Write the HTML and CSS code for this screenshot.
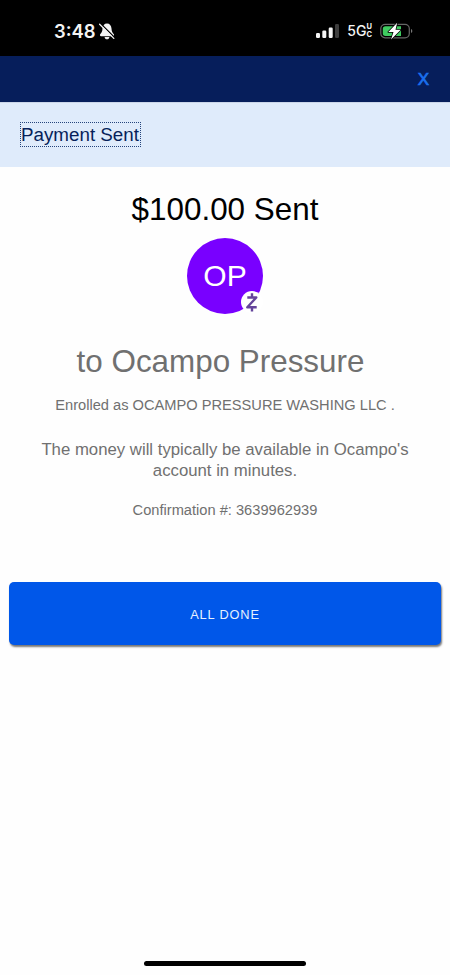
FILE: index.html
```html
<!DOCTYPE html>
<html lang="en">
<head>
<meta charset="utf-8">
<meta name="viewport" content="width=device-width, initial-scale=1">
<title>Payment Sent</title>
<link rel="stylesheet" href="styles.css">
</head>
<body>
<div class="status">
  <div class="clock"><span>3:48</span>
    <svg class="bell" width="16" height="17" viewBox="0 0 16 17"><path d="M8 .5C5.300.5 3.700 2.500 3.500 5.500 3.300 8.500 2.700 9.500 1.300 11.100c-.7.9-.3 2.100.8 2.100h11.800c1.100 0 1.500-1.200.8-2.100C13.300 9.500 12.700 8.500 12.500 5.500 12.300 2.500 10.700.5 8 .5Z" fill="#f4f4f4"/><path d="M5.600 14h4.800c-.2 1.500-1 2.300-2.400 2.300s-2.200-.8-2.400-2.300Z" fill="#eee"/><path d="M1.300.2 15.800 14.700" stroke="#000" stroke-width="1.300"/><path d="M.6 1.200 14.800 15.400" stroke="#f4f4f4" stroke-width="1.300" stroke-linecap="round"/></svg>
  </div>
  <div class="indicators">
    <svg width="24" height="15" viewBox="0 0 24 15"><g fill="#f4f4f4"><rect x="0" y="9" width="4" height="5" rx="1.200"/><rect x="6.300" y="6.500" width="4" height="7.500" rx="1.200"/><rect x="12.700" y="3.500" width="4" height="10.500" rx="1.200"/></g><rect x="19" y="0" width="4" height="14" rx="1.200" fill="#3d3d3d"/></svg>
    <span class="network">5G</span><span class="uc"><span>U</span><span>C</span></span>
    <svg class="battery" width="33" height="18" viewBox="0 0 33 18"><rect x=".8" y="2.300" width="28.500" height="13.500" rx="4.300" fill="none" stroke="#666" stroke-width="1.200"/><path d="M5.500 4.200H21v9.700H5.500a2.700 2.700 0 0 1-2.700-2.700V6.900a2.700 2.700 0 0 1 2.700-2.700Z" fill="#3fcb60"/><path d="M31 7c1.800.6 1.800 3.400 0 4Z" fill="#777"/><path d="M17.200.8 8.300 10h5.200l-2.500 7.500L20.800 7.800h-5.300Z" fill="#fff" stroke="#000" stroke-width="1.500" stroke-linejoin="round" paint-order="stroke"/></svg>
  </div>
</div>
<header class="topbar"><button class="close" aria-label="Close">X</button></header>
<div class="heading"><h1>Payment Sent</h1></div>
<main>
  <p class="amount">$100.00 Sent</p>
  <div class="avatar"><span>OP</span>
    <svg class="zelle" width="24" height="24" viewBox="0 0 24 24"><circle cx="12" cy="12" r="11" fill="#fff"/><path d="M7.300 7.500h9L7.300 17.300h9.400M12 3.200v4.300M12 17.300v4.300" fill="none" stroke="#65459b" stroke-width="2.400" stroke-linejoin="round"/></svg>
  </div>
  <h2>to Ocampo Pressure</h2>
  <p class="enrolled">Enrolled as OCAMPO PRESSURE WASHING LLC .</p>
  <p class="message">The money will typically be available in Ocampo's<br>account in minutes.</p>
  <p class="confirmation">Confirmation #: 3639962939</p>
  <button class="done">ALL DONE</button>
</main>
<footer><div class="home"></div></footer>
</body>
</html>
```
FILE: styles.css
```css
* { box-sizing: border-box; }
body {
  margin: 0;
  height: 975px;
  display: flex;
  flex-direction: column;
  overflow: hidden;
  background: #fefefe;
  color: #707070;
  font-family: "Liberation Sans", Arial, sans-serif;
}
h1, h2, p { margin: 0; font-weight: 400; }
button { border: 0; font-family: inherit; padding: 0; }
.status {
  height: 56px;
  flex: none;
  background: #000;
  color: #f4f4f4;
  display: flex;
  justify-content: space-between;
  padding: 18px 37px 0 54px;
}
.clock { display: flex; height: 26px; align-items: center; gap: 4px; font: 600 18.400px/26px Inter, sans-serif; }
.bell { margin-left: -1px; }
.indicators { display: flex; height: 26px; align-items: center; }
.network { margin-left: 7px; font: 500 14px/26px Inter, sans-serif; }
.uc { display: flex; flex-direction: column; margin: 0 8px 0 0; font: 700 7.500px/8px Inter, sans-serif; }
.topbar {
  height: 46px;
  flex: none;
  background: #061e5b;
  display: flex;
  justify-content: flex-end;
  align-items: center;
  padding: 2px 21px 0 0;
}
.close { background: none; color: #1b70ee; font: 500 17px/20px "Liberation Sans", sans-serif; -webkit-text-stroke: .7px #1b70ee; }
.heading { height: 65px; flex: none; background: #dfebfb; padding: 19px 20px 0; border-top: 1px solid #cbd6e9; }
.heading h1 {
  width: 121px;
  height: 25px;
  border: 1px dotted #24447c;
  color: #071f5a;
  font-size: 18.800px;
  line-height: 23px;
  white-space: nowrap;
}
main { flex: 1; display: flex; flex-direction: column; align-items: center; padding: 0 9px; text-align: center; }
main p, main h2 { white-space: nowrap; }
.amount { margin-top: 25px; color: #000; font-size: 31.400px; line-height: 36px; }
.avatar {
  position: relative;
  width: 76px;
  height: 76px;
  margin-top: 10px;
  border-radius: 50%;
  background: #7900ff;
  color: #fff;
  font-size: 30px;
  line-height: 76px;
}
.zelle { position: absolute; left: 53px; top: 52px; }
h2 { margin: 30px 9px 0 0; font-size: 31.400px; line-height: 36px; }
.enrolled { margin-top: 16px; font-size: 14.650px; line-height: 18px; }
.message { margin-top: 25px; font-size: 16.750px; line-height: 21px; }
.confirmation { margin-top: 20px; font-size: 14.650px; line-height: 18px; }
.done {
  align-self: stretch;
  height: 63px;
  margin-top: 63px;
  border-radius: 5px;
  background: #0057e9;
  color: #e4f0ff;
  font-size: 12.800px;
  letter-spacing: .85px;
  padding-top: 1px;
  box-shadow: 1px 2px 2px #777;
}
footer { flex: none; height: 14px; display: flex; justify-content: center; }
.home { width: 162px; height: 5px; border-radius: 3px; background: #000; }
```
